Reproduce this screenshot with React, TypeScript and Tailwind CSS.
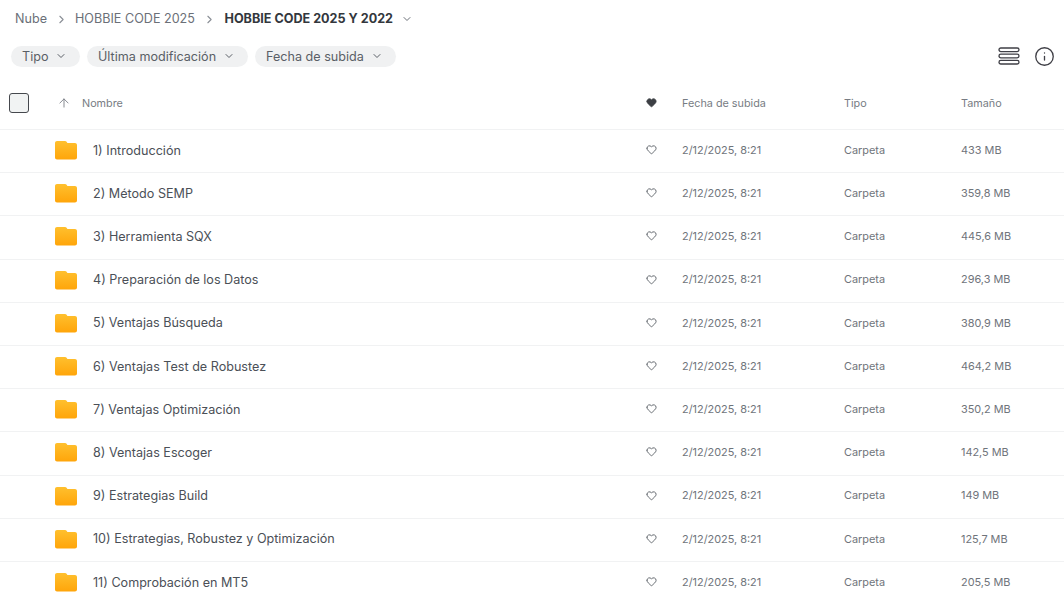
import { ChevronDown, ChevronRight, ArrowUp, Heart, Info } from "lucide-react";

const rows = [
  { name: "1) Introducción", size: "433 MB" },
  { name: "2) Método SEMP", size: "359,8 MB" },
  { name: "3) Herramienta SQX", size: "445,6 MB" },
  { name: "4) Preparación de los Datos", size: "296,3 MB" },
  { name: "5) Ventajas Búsqueda", size: "380,9 MB" },
  { name: "6) Ventajas Test de Robustez", size: "464,2 MB" },
  { name: "7) Ventajas Optimización", size: "350,2 MB" },
  { name: "8) Ventajas Escoger", size: "142,5 MB" },
  { name: "9) Estrategias Build", size: "149 MB" },
  { name: "10) Estrategias, Robustez y Optimización", size: "125,7 MB" },
  { name: "11) Comprobación en MT5", size: "205,5 MB" },
];

const filters = [
  { label: "Tipo", className: "w-[69px]" },
  { label: "Última modificación", className: "w-[161px]" },
  { label: "Fecha de subida", className: "w-[141px]" },
];

function FolderIcon() {
  return (
    <svg width="22" height="20" viewBox="0 0 22 20">
      <defs>
        <linearGradient id="folderFill" x1="0" y1="0" x2="0" y2="1">
          <stop offset="0%" stopColor="#ffc02e" />
          <stop offset="100%" stopColor="#ffa50a" />
        </linearGradient>
      </defs>
      <path
        d="M2 0h8c.7 0 1.200.3 1.600.8L12.400 2H20c1.100 0 2 .9 2 2V16.500c0 1.100-.9 2-2 2H2c-1.100 0-2-.9-2-2V2c0-1.100.9-2 2-2z"
        fill="url(#folderFill)"
      />
    </svg>
  );
}

function ListIcon() {
  return (
    <svg width="22" height="18" viewBox="0 0 22 18" fill="none" stroke="#3f3f46" strokeWidth="1.3">
      <rect x="1" y="1" width="20" height="3.600" rx="1.800" />
      <rect x="1" y="7.200" width="20" height="3.600" rx="1.800" />
      <rect x="1" y="13.400" width="20" height="3.600" rx="1.800" />
    </svg>
  );
}

export default function App() {
  return (
    <div className="h-[594px] w-[1064px] overflow-hidden bg-white font-['Inter',sans-serif] text-[#4b5057]">
      {/* Breadcrumb */}
      <div className="flex h-[38px] items-center pl-[15px] text-[12.6px] text-[#6b7078]">
        <span>Nube</span>
        <ChevronRight className="mx-[7.500px] h-[13px] w-[13px] text-[#8a8f96]" />
        <span>HOBBIE CODE 2025</span>
        <ChevronRight className="ml-[8px] mr-[8.500px] h-[13px] w-[13px] text-[#8a8f96]" />
        <span className="font-bold text-[#33373d]">HOBBIE CODE 2025 Y 2022</span>
        <ChevronDown className="ml-[8px] h-[12px] w-[12px] text-[#6b7078]" />
      </div>

      {/* Filters */}
      <div className="flex h-[36px] items-center pl-[11px] pr-[9px]">
        <div className="flex gap-[7px]">
          {filters.map((f) => (
            <div
              key={f.label}
              className={`flex h-[21px] items-center justify-between rounded-full bg-[#f0f1f2] pl-[11px] pr-[13px] text-[12.6px] text-[#5a5f66] ${f.className}`}
            >
              <span className="pt-[2px]">{f.label}</span>
              <ChevronDown className="h-[12px] w-[12px]" />
            </div>
          ))}
        </div>
        <div className="ml-auto flex items-center gap-[14px]">
          <ListIcon />
          <Info className="h-[21px] w-[21px] text-[#3f3f46]" strokeWidth={1.5} />
        </div>
      </div>

      {/* Table header */}
      <div className="flex h-[56px] items-center border-b border-[#f1f2f3] pt-[2px] text-[10.8px] text-[#777c83]">
        <div className="ml-[9px] h-[20px] w-[20px] rounded-[3px] border border-[#45484d] bg-[#f1f3f3]" />
        <ArrowUp className="ml-[28px] h-[14px] w-[14px] text-[#777c83]" strokeWidth={1.5} />
        <span className="ml-[11px] w-[564px] pt-[4px]">Nombre</span>
        <Heart className="h-[11px] w-[11px] fill-[#3c3f44] text-[#3c3f44]" />
        <span className="ml-[25px] w-[162px] pt-[3px]">Fecha de subida</span>
        <span className="w-[117px] pt-[3px]">Tipo</span>
        <span className="pt-[3px]">Tamaño</span>
      </div>

      {/* Rows */}
      {rows.map((row) => (
        <div key={row.name} className="flex h-[43.2px] items-center border-b border-[#f1f2f3] text-[10.9px] text-[#6f747b]">
          <div className="ml-[55px] w-[38px]">
            <FolderIcon />
          </div>
          <span className="w-[553px] text-[12.6px] text-[#4b5057]">{row.name}</span>
          <Heart className="mb-[3px] h-[11px] w-[11px] text-[#5a5f66]" />
          <span className="mb-[2px] ml-[25px] w-[162px]">2/12/2025, 8:21</span>
          <span className="mb-[2px] w-[117px]">Carpeta</span>
          <span className="mb-[2px]">{row.size}</span>
        </div>
      ))}
    </div>
  );
}
